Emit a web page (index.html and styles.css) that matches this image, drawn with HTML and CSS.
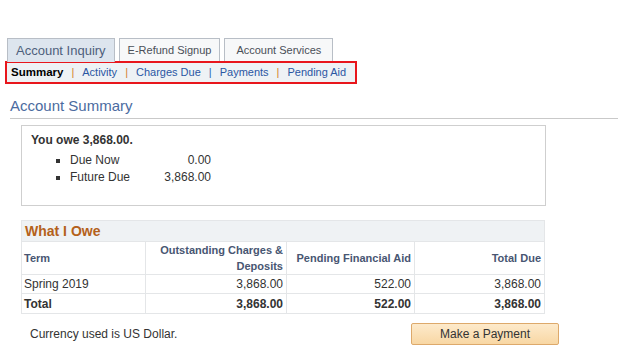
FILE: index.html
```html
<!DOCTYPE html>
<html>
<head>
	<meta charset="UTF-8">
	<title>Account Summary</title>
	<link rel="stylesheet" href="styles.css">
</head>
<body>
	<!-- tabs -->
	<div class="tabs">
		<div class="tab active">Account Inquiry</div>
		<div class="tab">E-Refund Signup</div>
		<div class="tab wide">Account Services</div>
	</div>
	<div class="subnav">
		<div class="subnav-in">
			<b>Summary</b><span class="sep or">|</span><a>Activity</a><span class="sep or">|</span><a>Charges Due</a><span class="sep bl">|</span><a>Payments</a><span class="sep or">|</span><a>Pending Aid</a>
		</div>
	</div>
	<h2 class="title">Account Summary</h2>
	<!-- summary box -->
	<div class="owe">
		<div class="owe-head">You owe 3,868.00.</div>
		<ul>
			<li><span class="lbl">Due Now</span><span class="amt">0.00</span></li>
			<li><span class="lbl">Future Due</span><span class="amt">3,868.00</span></li>
		</ul>
	</div>
	<!-- what i owe -->
	<table class="grid">
		<colgroup>
			<col class="c1"><col class="c2"><col class="c3"><col class="c4">
		</colgroup>
		<tr><td colspan="4" class="cap">What I Owe</td></tr>
		<tr class="hd">
			<th>Term</th>
			<th class="r">Outstanding Charges &amp;<br>Deposits</th>
			<th class="r">Pending Financial Aid</th>
			<th class="r">Total Due</th>
		</tr>
		<tr class="row">
			<td>Spring 2019</td>
			<td class="r">3,868.00</td>
			<td class="r">522.00</td>
			<td class="r">3,868.00</td>
		</tr>
		<tr class="tot">
			<td>Total</td>
			<td class="r">3,868.00</td>
			<td class="r">522.00</td>
			<td class="r">3,868.00</td>
		</tr>
	</table>
	<div class="foot">
		<span>Currency used is US Dollar.</span>
		<button class="pay">Make a Payment</button>
	</div>
</body>
</html>
```
FILE: styles.css
```css
body{margin:0;padding:0;font-family:"Liberation Sans",Arial,sans-serif;font-size:12px;color:#333;background:#fff;}
.tabs{display:flex;gap:4px;padding:38px 0 0 7px;height:23px;}
.tab{height:22px;line-height:22px;padding:0 8px;border:1px solid #b8bec6;border-bottom:none;background:#f7f8f9;color:#4a4f57;font-size:11px;white-space:nowrap;}
.tab.wide{padding:0 11px;}
.tab.active{background:#dde5ee;color:#4e5f7c;font-size:13px;padding:0 8px;height:23px;line-height:24px;}
.subnav{margin-left:5px;width:348px;height:19px;border:2px solid #e8161c;}
.subnav-in{height:19px;line-height:19px;padding-left:4px;background:#eef2f5;color:#2b55a0;font-size:11px;white-space:nowrap;}
.subnav-in b{color:#000;font-size:11.5px;}
.subnav-in a{color:#2a56a3;}
.sep{padding:0 8px 0 8px;}
.sep.or{color:#d4812e;}
.sep.bl{color:#2a6ab3;}
.title{margin:13px 0 0 10px;padding-bottom:4px;font-weight:normal;font-size:15px;color:#4b6ba0;border-bottom:1px solid #c9c9c9;}
.owe{margin:6px 0 0 21px;width:523px;height:79px;border:1px solid #cfcfcf;}
.owe-head{margin:7px 0 0 9px;font-weight:bold;color:#333;}
.owe ul{margin:5px 0 0 48px;padding:0;list-style:square;}
.owe li{height:17px;line-height:17px;}
.lbl{display:inline-block;width:93px;}
.amt{display:inline-block;width:48px;text-align:right;}
.grid{margin:14px 0 0 21px;width:523px;table-layout:fixed;border-collapse:collapse;border:1px solid #cfd4d9;}
.grid td,.grid th{border:1px solid #e4e6e8;padding:0 3px 0 2px;font-size:12px;}
.grid .cap{background:#eff2f4;color:#b4611a;font-weight:bold;font-size:14px;height:20px;padding:0 3px;border-bottom:1px solid #e4e6e8;}
.grid .hd th{background:#fff;color:#485672;font-weight:bold;font-size:11px;height:32px;text-align:left;line-height:16px;}
.grid .r{text-align:right;}
.grid th.r{text-align:right;}
.row td{height:18px;}
.c1{width:124px;}
.c2{width:141px;}
.c3{width:128px;}
.c4{width:130px;}
.tot td{font-weight:bold;height:19px;}
.foot{display:flex;align-items:center;justify-content:space-between;width:529px;margin:9px 0 0 30px;}
.pay{width:148px;height:22px;border:1px solid #dda96b;border-radius:2px;background:linear-gradient(#fdeacb,#f8d7a4);color:#333;font-family:"Liberation Sans",Arial,sans-serif;font-size:12px;}
```
